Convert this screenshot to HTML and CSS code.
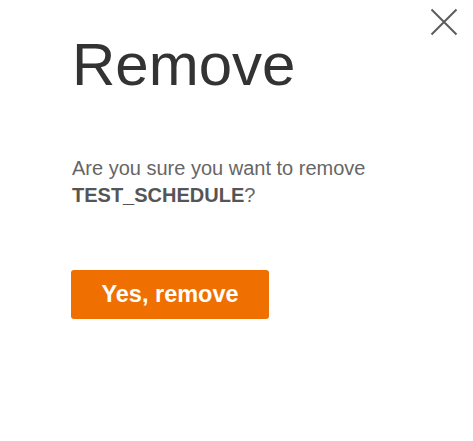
FILE: index.html
```html
<!DOCTYPE html>
<html>
<head>
<meta charset="utf-8">
<link rel="stylesheet" href="styles.css">
</head>
<body>
<div class="dialog">
  <button class="close" aria-label="Close">
    <svg width="28" height="28" viewBox="0 0 28 28"><path d="M1.5 1.5 L26.5 26.5 M26.5 1.5 L1.5 26.5" stroke="#5c5c5c" stroke-width="2" fill="none"/></svg>
  </button>
  <h1 class="title">Remove</h1>
  <p class="message">Are you sure you want to remove <strong>TEST_SCHEDULE</strong>?</p>
  <button class="confirm">Yes, remove</button>
</div>
</body>
</html>
```
FILE: styles.css
```css
html, body { margin: 0; padding: 0; background: #fff; }
body { font-family: "Liberation Sans", Arial, sans-serif; }
.dialog {
  position: relative;
  width: 473px;
  height: 441px;
  box-sizing: border-box;
  padding: 29px 72px 0 72px;
}
.close {
  position: absolute;
  top: 8px;
  right: 15px;
  border: 0;
  background: none;
  padding: 0;
  width: 28px;
  height: 28px;
  cursor: pointer;
}
.close svg { display: block; }
.title {
  margin: 0;
  font-size: 60px;
  font-weight: 400;
  color: #333;
  line-height: 72px;
}
.message {
  margin: 54px 0 0 0;
  font-size: 20px;
  line-height: 27px;
  color: #666;
  width: 310px;
}
.message strong { color: #555; }
.confirm {
  margin: 61px 0 0 -1px;
  width: 198px;
  height: 49px;
  border: 0;
  border-radius: 3px;
  background: #ef7000;
  color: #fff;
  font-family: "Liberation Sans", Arial, sans-serif;
  font-weight: 700;
  font-size: 23.5px;
  cursor: pointer;
  display: block;
  padding: 0;
}
```
